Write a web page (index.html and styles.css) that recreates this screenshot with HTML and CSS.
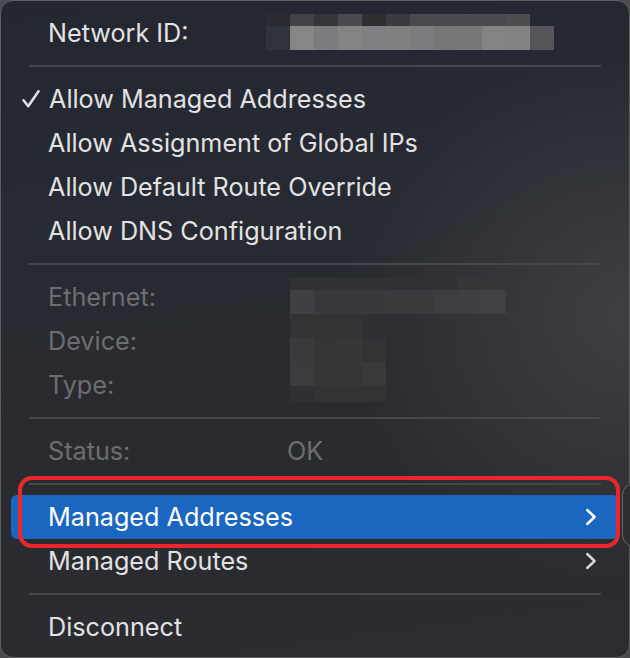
FILE: index.html
```html
<!DOCTYPE html>
<html>
<head>
<meta charset="utf-8">
<link rel="stylesheet" href="styles.css">
</head>
<body>
<div class="screen">
  <div class="menu">
    <div class="row info-row">
      <span class="key key-id">Network ID:</span>
      <div class="mosaic mosaic-id">
        <i class="c-bg"></i><i class="c-43"></i><i class="c-36"></i><i class="c-4a"></i><i class="c-2e"></i><i class="c-3b"></i><i class="c-4a"></i><i class="c-4a"></i><i class="c-4b"></i><i class="c-4a"></i><i class="c-4d"></i><i></i>
        <i class="c-2f"></i><i class="c-86"></i><i class="c-7b"></i><i class="c-84"></i><i class="c-7f"></i><i class="c-80"></i><i class="c-7b"></i><i class="c-76"></i><i class="c-78"></i><i class="c-84"></i><i class="c-82"></i><i class="c-55"></i>
      </div>
    </div>
    <div class="sep"></div>
    <div class="row">
      <svg class="check" width="18" height="18" viewBox="0 0 18 18"><path d="M1.5 10.2 L6.2 16.2 L16.5 1.2" fill="none" stroke="currentColor" stroke-width="2.5" stroke-linecap="round" stroke-linejoin="round"/></svg>
      <span>Allow Managed Addresses</span>
    </div>
    <div class="row"><span>Allow Assignment of Global IPs</span></div>
    <div class="row"><span>Allow Default Route Override</span></div>
    <div class="row"><span>Allow DNS Configuration</span></div>
    <div class="sep"></div>
    <div class="group">
      <div class="row dim"><span>Ethernet:</span></div>
      <div class="row dim"><span>Device:</span></div>
      <div class="row dim"><span>Type:</span></div>
      <div class="mosaic mosaic-eth">
        <i></i><i class="d-32"></i><i class="d-32"></i><i class="d-32"></i><i class="d-32"></i><i class="d-32"></i><i class="d-32"></i><i class="d-32"></i><i class="d-36"></i><i class="d-36"></i>
        <i></i><i class="d-40"></i><i class="d-38"></i><i class="d-38"></i><i class="d-38"></i><i class="d-3b"></i><i class="d-3b"></i><i class="d-3d"></i><i class="d-3f"></i><i class="d-41"></i>
        <i></i><i class="d-33"></i><i class="d-33"></i><i class="d-33"></i><i class="d-30"></i><i></i><i></i><i></i><i></i><i></i>
        <i></i><i class="d-3a"></i><i class="d-35"></i><i class="d-37"></i><i class="d-33"></i><i></i><i></i><i></i><i></i><i></i>
        <i></i><i class="d-3c"></i><i class="d-36"></i><i class="d-36"></i><i class="d-3a"></i><i></i><i></i><i></i><i></i><i></i>
        <i></i><i class="d-2f"></i><i class="d-33"></i><i class="d-33"></i><i class="d-33"></i><i></i><i></i><i></i><i></i><i></i>
      </div>
    </div>
    <div class="sep"></div>
    <div class="row dim"><span class="key key-status">Status:</span><span>OK</span></div>
    <div class="sep"></div>
    <div class="row sub active">
      <span>Managed Addresses</span>
      <svg class="chev" width="12" height="18" viewBox="0 0 12 18"><path d="M2.2 2 L9.6 9 L2.2 16" fill="none" stroke="currentColor" stroke-width="2.5" stroke-linecap="round" stroke-linejoin="round"/></svg>
    </div>
    <div class="row sub">
      <span>Managed Routes</span>
      <svg class="chev" width="12" height="18" viewBox="0 0 12 18"><path d="M2.2 2 L9.6 9 L2.2 16" fill="none" stroke="currentColor" stroke-width="2.5" stroke-linecap="round" stroke-linejoin="round"/></svg>
    </div>
    <div class="sep"></div>
    <div class="row"><span>Disconnect</span></div>
  </div>
  <div class="submenu-edge"></div>
  <div class="annot"></div>
</div>
</body>
</html>
```

FILE: styles.css
```css
* { box-sizing: border-box; }

html, body {
  margin: 0;
  padding: 0;
  background: #4a4b4e;
}

.screen {
  position: relative;
  width: 630px;
  height: 658px;
  overflow: hidden;
  background: #4a4b4e;
}

.menu {
  position: relative;
  width: 630px;
  height: 658px;
  border: 1px solid #5e5f62;
  border-radius: 13px;
  padding: 10px 0 9px;
  font-family: "Inter", "Noto Sans", sans-serif;
  font-size: 25.2px;
  color: #e2e2e2;
  background:
    radial-gradient(ellipse 45% 40% at 100% 48%, rgba(66, 67, 71, 0.85) 0%, rgba(66, 67, 71, 0) 100%),
    linear-gradient(172deg, #242731 0%, #272a32 30%, #2a2b30 60%, #2b2c30 100%);
}

.row {
  display: flex;
  align-items: center;
  height: 44px;
  margin: 0 10px;
  padding: 0 22px 0 37px;
  border-radius: 6px;
  white-space: nowrap;
}

.row.dim { color: #6d6e71; }

.check {
  margin-left: -26px;
  margin-right: 9px;
  flex: none;
}

.key-id { width: 218px; flex: none; }
.key-status { width: 239px; flex: none; }

.sub { justify-content: space-between; }

.chev { flex: none; color: #d6d6d6; }

.active {
  background: #1a66c0;
  color: #ffffff;
}
.active .chev { color: #ffffff; }

.sep {
  height: 2px;
  margin: 10px 28px;
  background: #46474b;
}

.group { position: relative; }

.mosaic { display: grid; }
.mosaic i { display: block; }

.mosaic-id {
  align-self: flex-start;
  margin-top: 3px;
  grid-template-columns: repeat(12, 24px);
  grid-template-rows: 12px 24px;
}

.mosaic-eth {
  position: absolute;
  left: 265px;
  top: 3px;
  grid-template-columns: repeat(10, 24px);
  grid-template-rows: 12px 24px 24px 24px 24px 16px;
}

.c-bg { background: #2a2b31; }
.c-43 { background: #434245; }
.c-36 { background: #363539; }
.c-4a { background: #4a4a4e; }
.c-4b { background: #4b4b4f; }
.c-4d { background: #4d4d50; }
.c-2e { background: #2e2e31; }
.c-3b { background: #3b3b3f; }
.c-2f { background: #2f343c; }
.c-86 { background: #868686; }
.c-7b { background: #7b7c7f; }
.c-84 { background: #848485; }
.c-7f { background: #7f8083; }
.c-80 { background: #808081; }
.c-76 { background: #767676; }
.c-78 { background: #787878; }
.c-82 { background: #828282; }
.c-55 { background: #555459; }

.d-2f { background: #2f3035; }
.d-30 { background: #303034; }
.d-32 { background: #323236; }
.d-33 { background: #333336; }
.d-35 { background: #353537; }
.d-36 { background: #363639; }
.d-37 { background: #37373a; }
.d-38 { background: #38393d; }
.d-3a { background: #3a3a3c; }
.d-3b { background: #3b3b3e; }
.d-3c { background: #3c3c3e; }
.d-3d { background: #3d3e41; }
.d-3f { background: #3f4044; }
.d-40 { background: #404043; }
.d-41 { background: #414145; }

.submenu-edge {
  position: absolute;
  left: 622px;
  top: 483px;
  width: 40px;
  height: 64px;
  border: 1.5px solid #6a6b6e;
  border-radius: 12px;
  background: #2c2d31;
}

.annot {
  position: absolute;
  left: 18px;
  top: 476px;
  width: 602px;
  height: 72px;
  border: 4px solid #e8282b;
  border-radius: 14px;
}
```
